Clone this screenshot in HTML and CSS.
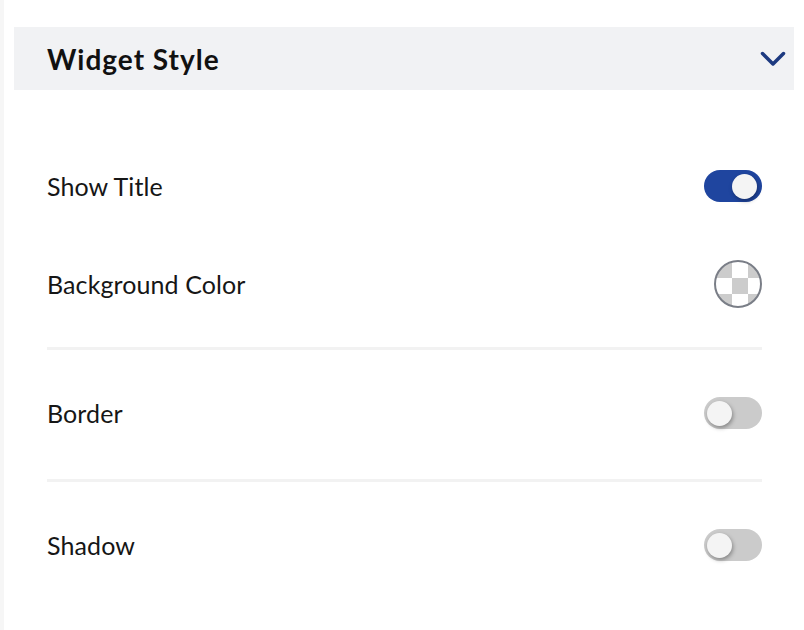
FILE: index.html
```html
<!DOCTYPE html>
<html lang="en">
<head>
    <meta charset="UTF-8">
    <meta name="viewport" content="width=device-width, initial-scale=1.0">
    <title>Widget Style</title>
    <link rel="stylesheet" href="styles.css">
</head>
<body>
    <div class="panel">
        <!-- Section Header -->
        <div class="panel-header">
            <h2>Widget Style</h2>
            <svg class="chevron" width="26" height="16" viewBox="0 0 26 16">
                <path d="M2.5 2.5 L13 13 L23.5 2.5" fill="none" stroke="#1d3a80" stroke-width="3.5" stroke-linecap="round" stroke-linejoin="round"/>
            </svg>
        </div>

        <div class="panel-body">
            <div class="setting-row">
                <span class="setting-label">Show Title</span>
                <div class="toggle on"><span class="knob"></span></div>
            </div>

            <div class="setting-row spaced">
                <span class="setting-label">Background Color</span>
                <div class="swatch"></div>
            </div>

            <div class="divider"></div>

            <div class="setting-row">
                <span class="setting-label">Border</span>
                <div class="toggle"><span class="knob"></span></div>
            </div>

            <div class="divider lower"></div>

            <div class="setting-row">
                <span class="setting-label">Shadow</span>
                <div class="toggle"><span class="knob"></span></div>
            </div>
        </div>
    </div>
</body>
</html>
```

FILE: styles.css
```css
/* Basic Reset */
* { box-sizing: border-box; margin: 0; padding: 0; }

body {
    background: #ffffff;
    font-family: Lato, "Open Sans", Arial, sans-serif;
    color: #161616;
}

/* Panel */
.panel {
    min-height: 630px;
    border-left: 4px solid #f6f6f6;
    padding: 27px 10px 0 10px;
}

.panel-header {
    height: 63px;
    background-color: #f1f2f4;
    display: flex;
    align-items: center;
    justify-content: space-between;
    padding: 0 8px 0 33px;
}

.panel-header h2 {
    font-size: 28px;
    font-weight: 700;
    letter-spacing: 1px;
    color: #111111;
}

.chevron {
    display: block;
}

/* Rows */
.panel-body {
    padding: 64px 32px 0 33px;
}

.setting-row {
    height: 64px;
    display: flex;
    align-items: center;
    justify-content: space-between;
}

.setting-row.spaced {
    margin-top: 34px;
}

.setting-label {
    font-size: 25px;
    letter-spacing: 0.1px;
}

.divider {
    height: 3px;
    background-color: #f2f2f2;
    margin: 31px 0 31px 0;
}

.divider.lower {
    margin-top: 34px;
}

/* Toggle switch */
.toggle {
    width: 58px;
    height: 32px;
    border-radius: 16px;
    background-color: #cbcbcb;
    display: flex;
    align-items: center;
    padding: 0 3px;
}

.toggle.on {
    background-color: #1f459f;
    justify-content: flex-end;
    padding: 0 5px;
}

.knob {
    width: 25px;
    height: 25px;
    border-radius: 50%;
    background-color: #f4f4f4;
    box-shadow: 1px 2px 4px rgba(0, 0, 0, 0.35);
}

/* Colour swatch */
.swatch {
    width: 48px;
    height: 48px;
    border-radius: 50%;
    border: 2px solid #7a7e87;
    background: conic-gradient(#ffffff 25%, #cccccc 0 50%, #ffffff 0 75%, #cccccc 0);
    background-size: 32px 32px;
}
```
